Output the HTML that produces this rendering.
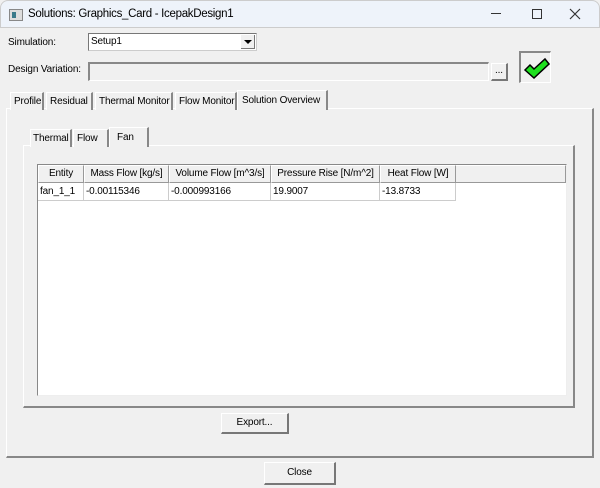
<!DOCTYPE html>
<html><head><style>
*{box-sizing:border-box;margin:0;padding:0}
body{width:600px;height:488px;background:#f0f0f0;font-family:"Liberation Sans",sans-serif;font-size:10px;letter-spacing:-0.15px;color:#000;position:relative;overflow:hidden;white-space:nowrap}
.a{position:absolute}
.panel{border-top:1px solid #fff;border-left:1px solid #fff;border-right:2px solid #888;border-bottom:2px solid #888}
.tab{position:absolute;border-top:1px solid #fff;border-left:1px solid #fff;border-right:2px solid #888;padding-left:3px;line-height:17px;background:#f0f0f0;height:18px;overflow:hidden}
.btn{position:absolute;border-top:1px solid #fff;border-left:1px solid #fff;border-right:2px solid #777;border-bottom:2px solid #777;text-align:center;background:#f0f0f0}
.th{position:absolute;top:0;height:18px;border-right:1px solid #999;border-bottom:1px solid #999;border-top:1px solid #fff;border-left:1px solid #fff;text-align:center;line-height:16px;background:#f0f0f0;overflow:hidden}
.td{position:absolute;top:18px;height:18px;border-right:1px solid #ccc;border-bottom:1px solid #ccc;padding-left:2px;line-height:17px;background:#fff;overflow:hidden}
</style></head><body>
<div class="a" style="left:0;top:0;width:600px;height:28px;background:#eef3fa;border-radius:8px 8px 0 0;border:1px solid #ccc"></div>
<div class="a" style="left:9px;top:9px;width:14px;height:12px;background:#ddd;border:1px solid #888"><div class="a" style="left:2px;top:2px;width:4px;height:6px;background:#3a7a8a"></div></div>
<div class="a" style="left:28px;top:8px;font-size:11.5px;letter-spacing:-0.3px">Solutions: Graphics_Card - IcepakDesign1</div>
<div class="a" style="left:491px;top:13px;width:10px;height:1px;background:#333"></div>
<div class="a" style="left:532px;top:9px;width:10px;height:10px;border:1px solid #333"></div>
<svg class="a" style="left:569px;top:8px" width="12" height="12"><path d="M1 1L11 11M11 1L1 11" stroke="#333" stroke-width="1.2"/></svg>

<div class="a" style="left:8px;top:37px">Simulation:</div>
<div class="a" style="left:88px;top:33px;width:169px;height:18px;background:#fff;border:1px solid #777;border-right-color:#ccc;border-bottom-color:#ccc;padding-left:2px;line-height:15px">Setup1</div>
<div class="a" style="left:241px;top:35px;width:14px;height:14px;background:#f0f0f0;border-right:1px solid #777;border-bottom:1px solid #777"><div class="a" style="left:3px;top:5px;border-left:4px solid transparent;border-right:4px solid transparent;border-top:4px solid #000"></div></div>
<div class="a" style="left:8px;top:64px">Design Variation:</div>
<div class="a" style="left:88px;top:62px;width:401px;height:19px;border-top:2px solid #888;border-left:2px solid #888;border-right:1px solid #fff;border-bottom:1px solid #fff"></div>
<div class="btn" style="left:491px;top:63px;width:17px;height:18px;line-height:14px">...</div>
<div class="a" style="left:519px;top:51px;width:32px;height:32px;border-top:2px solid #888;border-left:2px solid #888;border-right:1px solid #fff;border-bottom:1px solid #fff">
<svg width="28" height="28" style="position:absolute;left:1px;top:1px"><path d="M3 16 L8 11 L12 15 L23 5 L27 10 L12 24 Z" fill="#1ee01e" stroke="#000" stroke-width="1.5"/></svg></div>

<div class="a panel" style="left:6px;top:108px;width:588px;height:350px"></div>
<div class="tab" style="left:10px;top:92px;width:34px">Profile</div>
<div class="tab" style="left:46px;top:92px;width:47px">Residual</div>
<div class="tab" style="left:95px;top:92px;width:78px">Thermal Monitor</div>
<div class="tab" style="left:175px;top:92px;width:62px">Flow Monitor</div>
<div class="tab" style="left:237px;top:90px;width:91px;height:20px;padding-top:1px;padding-left:4px;border-bottom:0">Solution Overview</div>

<div class="a panel" style="left:23px;top:145px;width:552px;height:263px"></div>
<div class="tab" style="left:30px;top:129px;width:42px;padding-left:2px">Thermal</div>
<div class="tab" style="left:73px;top:129px;width:36px;padding-left:3px">Flow</div>
<div class="tab" style="left:109px;top:127px;width:40px;height:20px;padding-left:7px;padding-top:1px">Fan</div>

<div class="a" style="left:37px;top:164px;width:530px;height:232px;background:#fff;border:1px solid #888;border-right-color:#eee;border-bottom-color:#eee">
<div class="th" style="left:0;width:528px"></div>
<div class="th" style="left:0;width:46px">Entity</div>
<div class="th" style="left:46px;width:85px">Mass Flow [kg/s]</div>
<div class="th" style="left:131px;width:102px">Volume Flow [m^3/s]</div>
<div class="th" style="left:233px;width:109px">Pressure Rise [N/m^2]</div>
<div class="th" style="left:342px;width:76px">Heat Flow [W]</div>
<div class="td" style="left:0;width:46px">fan_1_1</div>
<div class="td" style="left:46px;width:85px">-0.00115346</div>
<div class="td" style="left:131px;width:102px">-0.000993166</div>
<div class="td" style="left:233px;width:109px">19.9007</div>
<div class="td" style="left:342px;width:76px">-13.8733</div>
</div>

<div class="btn" style="left:221px;top:413px;width:68px;height:21px;line-height:18px">Export...</div>
<div class="btn" style="left:264px;top:462px;width:72px;height:23px;line-height:20px">Close</div>
</body></html>
